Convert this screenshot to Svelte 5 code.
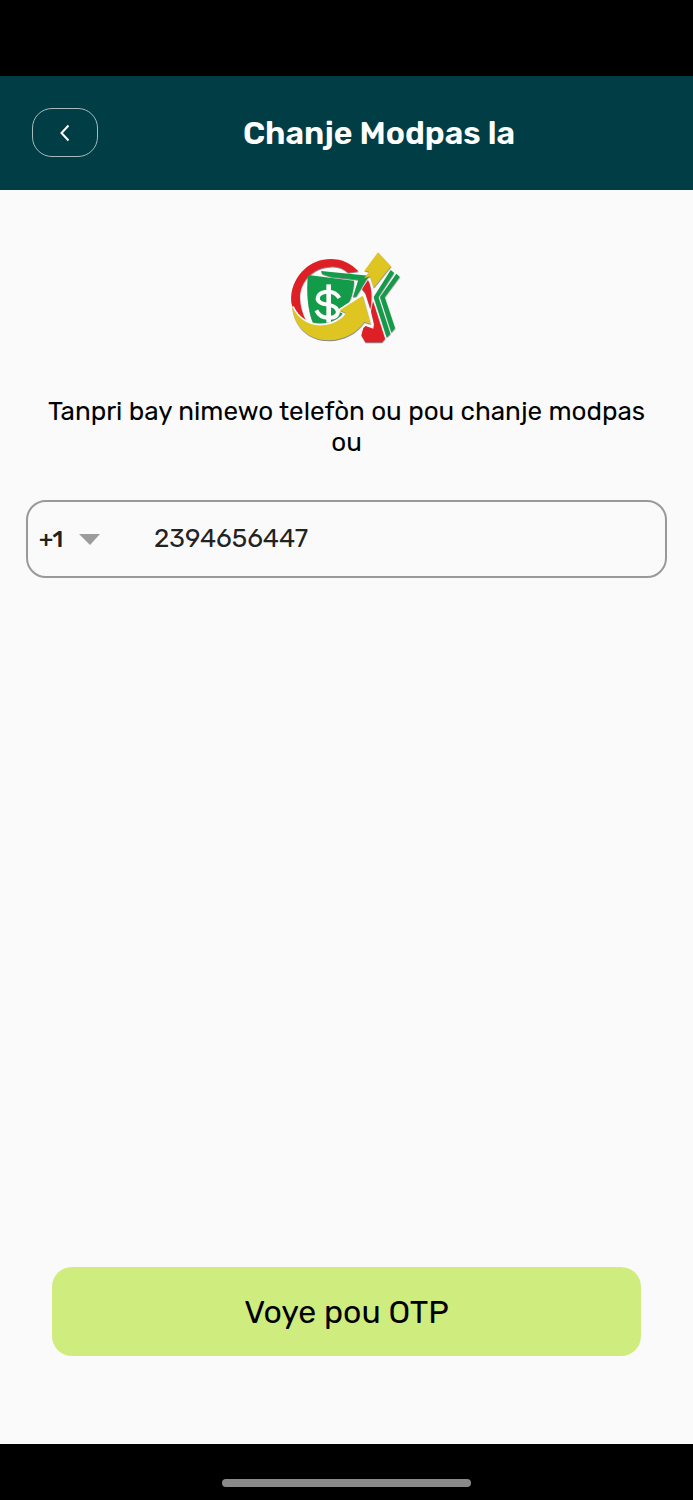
<script>
  let country = $state('+1');
  let phone = $state('2394656447');
</script>

<div class="screen">
  <div class="status"></div>

  <header>
    <button class="back" type="button" aria-label="Retounen">
      <svg width="12" height="18" viewBox="0 0 12 18" aria-hidden="true">
        <path d="M9.5 1.5 L2.5 9 L9.5 16.5" />
      </svg>
    </button>
    <h1>Chanje Modpas la</h1>
  </header>

  <form onsubmit={(e) => e.preventDefault()}>
    <svg class="logo" viewBox="36 33 330 276" aria-hidden="true">
      <g class="raised">
        <!-- ring -->
        <path fill="#df1f26" d="M74 243 C46 227 30 197 34 166 C41 104 91 57 152 57 C187 57 213 70 235 94 L204 98 C188 84 172 78 151 80 C101 82 64 120 60 164 C58 190 65 216 78 244 Z" />
        <path fill="#df1f26" d="M246 148 L264 120 C275 142 277 170 271 207 L256 160 Z" />

        <!-- banknotes -->
        <path fill="#129b48" d="M123 93 L266 107 L229 169 L219 171 L235 119 L153 110 L127 102 Z" />
        <path fill="#129b48" d="M84 105 L222 122 C221 153 213 182 195 206 L179 207 L187 220 C171 238 155 249 135 249 L99 248 C83 210 79 155 84 105 Z" />

        <!-- green chevrons -->
        <path fill="#129b48" d="M332 90 L342 98 L295 171 L331 281 L320 292 L281 171 Z" />
        <path fill="#129b48" d="M349 101 L359 110 L314 171 L345 264 L334 277 L300 171 Z" />
      </g>

      <!-- gap around the curved arrow -->
      <path fill="#fcfcfc" stroke="#fcfcfc" stroke-width="10" d="M37 201 C52 237 91 263 137 255 C167 250 188 235 198 219 L179 211 L246 168 L266 242 L253 246 C231 270 193 290 146 290 C86 290 46 253 37 201 Z" />

      <g class="raised">
        <!-- red leg -->
        <path fill="#df1f26" d="M279 184 L315 296 L306 307 L256 307 L244 286 L250 264 L257 258 L280 266 L282 252 L273 214 Z" />
      </g>

      <g class="raised">
        <path fill="#dfc522" d="M294 37 L333 79 L281 143 L270 109 L252 116 L267 95 L253 92 Z" />
        <path fill="#dfc522" d="M36 199 C52 237 91 263 137 255 C167 250 188 235 198 219 L179 211 L248 167 L272 252 L253 246 C231 278 193 300 146 301 C86 301 42 261 36 199 Z" />
      </g>

      <!-- dollar sign drawn on the front note -->
      <path fill="none" stroke="#fcfcfc" stroke-width="12" d="M178 174 C169 159 153 153 135 156 C113 160 106 179 122 188 C137 196 158 192 169 205 C181 221 167 234 148 233 C130 234 116 226 109 211" />
      <path fill="none" stroke="#fcfcfc" stroke-width="14" d="M146 133 V248" />
    </svg>

    <p id="hint">Tanpri bay nimewo telefòn ou pou chanje modpas ou</p>

    <div class="field">
      <div class="code">
        <select bind:value={country} aria-label="Kòd peyi">
          <option value="+1">+1</option>
          <option value="+509">+509</option>
        </select>
        <svg width="22" height="12" viewBox="0 0 22 12" aria-hidden="true">
          <path d="M0 1 H21 L11 12 Z" />
        </svg>
      </div>
      <input type="tel" bind:value={phone} aria-label="Nimewo telefòn" aria-describedby="hint" />
    </div>

    <button class="send" type="submit">Voye pou OTP</button>
  </form>

  <footer><span></span></footer>
</div>

<style>
  :global(body) {
    margin: 0;
    background: #fafafa;
  }

  .screen {
    display: flex;
    flex-direction: column;
    min-height: 100vh;
    background: #fafafa;
    color: #000;
    font-family: Rubik, Roboto, sans-serif;
  }

  .screen * {
    box-sizing: border-box;
  }

  button,
  input,
  select {
    margin: 0;
    padding: 0;
    border: 0;
    background: none;
    color: inherit;
    font: inherit;
  }

  .status {
    height: 76px;
    background: #000;
  }

  header {
    display: flex;
    align-items: center;
    padding: 32px 33px 33px 32px;
    background: #003d45;
    color: #fff;
  }

  .back {
    display: grid;
    place-items: center;
    width: 66px;
    height: 49px;
    border: 1px solid #a5bbbd;
    border-radius: 20px;
  }

  .back path {
    fill: none;
    stroke: #fff;
    stroke-width: 2;
  }

  h1 {
    flex: 1;
    margin: 0;
    font-size: 32px;
    line-height: 40px;
    font-weight: 600;
    text-align: center;
  }

  form {
    flex: 1;
    display: flex;
    flex-direction: column;
    padding: 61px 26px 88px;
  }

  .logo {
    align-self: center;
    width: 110px;
    height: 92px;
    overflow: visible;
  }

  .raised {
    filter: drop-shadow(1px 3px 2px rgb(60 60 60 / 0.6));
  }

  p {
    margin: 53px 20px 42px;
    font-size: 26px;
    line-height: 31px;
    text-align: center;
  }

  .field {
    display: flex;
    height: 78px;
    border: 2px solid #999;
    border-radius: 20px;
    color: #222;
  }

  .code {
    display: grid;
    align-items: center;
    width: 126px;
    padding-left: 11px;
  }

  .code select,
  .code svg {
    grid-area: 1 / 1;
  }

  .code select {
    width: 64px;
    height: 100%;
    appearance: none;
    font-size: 23px;
    font-weight: 500;
  }

  .code svg {
    margin-left: 40px;
    fill: #9c9c9c;
    pointer-events: none;
  }

  .field input {
    flex: 1;
    min-width: 0;
    padding-bottom: 2px;
    font-size: 26px;
    outline: none;
  }

  .send {
    height: 89px;
    margin: auto 26px 0;
    border-radius: 20px;
    background: #cfed7e;
    font-size: 32px;
  }

  footer {
    display: flex;
    justify-content: center;
    align-items: flex-end;
    height: 56px;
    padding-bottom: 13px;
    background: #000;
  }

  footer span {
    width: 36%;
    height: 8px;
    border-radius: 4px;
    background: #8a8a8a;
  }
</style>
